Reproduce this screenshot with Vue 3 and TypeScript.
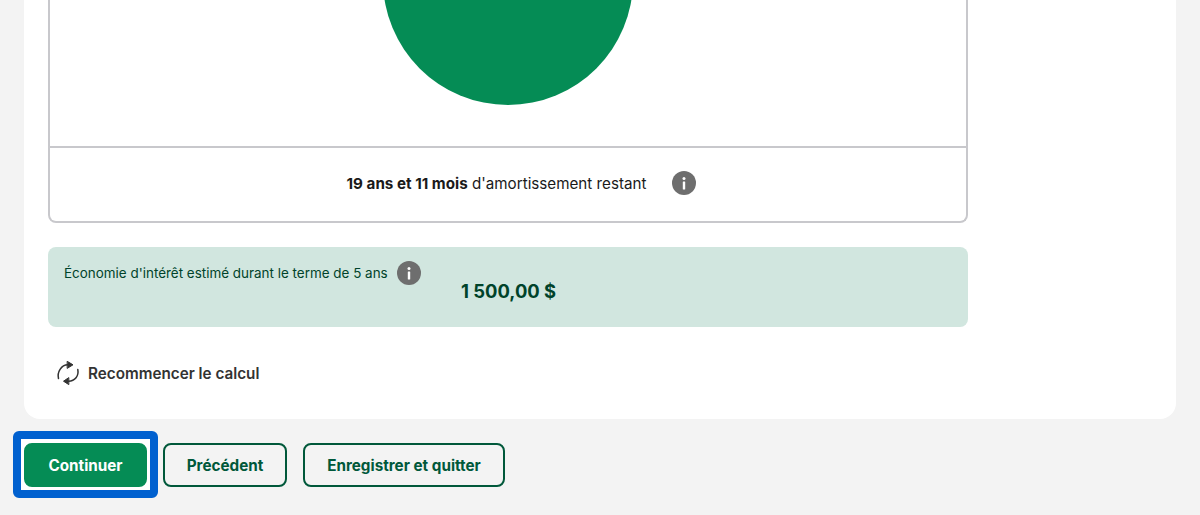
<template>
  <div class="page">
    <section class="card">
      <div class="chart-box">
        <div class="chart">
          <svg class="donut" width="260" height="105" viewBox="0 0 260 105" aria-hidden="true">
            <circle cx="130" cy="-20" r="125" fill="#058c55" />
          </svg>
        </div>
        <div class="chart-foot">
          <p class="remaining"><strong>19 ans et 11 mois</strong> d'amortissement restant</p>
          <svg class="info" width="24" height="24" viewBox="0 0 24 24" aria-hidden="true">
            <circle cx="12" cy="12" r="12" fill="#6e6e6e" />
            <circle cx="12" cy="7.400" r="1.500" fill="#fff" />
            <rect x="10.800" y="10.400" width="2.400" height="8" rx="0.500" fill="#fff" />
          </svg>
        </div>
      </div>

      <div class="savings">
        <div class="savings-label">
          <span>Économie d'intérêt estimé durant le terme de 5 ans</span>
          <svg class="info" width="24" height="24" viewBox="0 0 24 24" aria-hidden="true">
            <circle cx="12" cy="12" r="12" fill="#6e6e6e" />
            <circle cx="12" cy="7.400" r="1.500" fill="#fff" />
            <rect x="10.800" y="10.400" width="2.400" height="8" rx="0.500" fill="#fff" />
          </svg>
        </div>
        <div class="savings-amount">1 500,00 $</div>
      </div>

      <button class="reset" type="button">
        <svg width="24" height="26" viewBox="0 0 24 26" fill="none" stroke="#333" stroke-width="1.500" stroke-linecap="round" aria-hidden="true">
          <path d="M2.500 18.500C1 12 5 5 12 4.800h1" />
          <path d="M21.800 9.500C23 16 19 21 12.500 21.200h-1" />
          <path d="M11.500 1.500 17 4.800l-5.500 3.400z" fill="#333" stroke-linejoin="round" stroke-width="1" />
          <path d="M12.500 17.800 7.500 21.200l5 3.200z" fill="#333" stroke-linejoin="round" stroke-width="1" />
        </svg>
        <span>Recommencer le calcul</span>
      </button>
    </section>

    <nav class="actions">
      <button class="btn primary" type="button">Continuer</button>
      <button class="btn back" type="button">Précédent</button>
      <button class="btn save" type="button">Enregistrer et quitter</button>
    </nav>
  </div>
</template>

<script setup lang="ts">
</script>

<style>
html,
body {
  margin: 0;
  background: #f3f3f3;
}
</style>

<style scoped>
.page {
  box-sizing: border-box;
  height: 515px;
  overflow: hidden;
  padding: 0 24px;
  font-family: "Inter", "Liberation Sans", sans-serif;
  color: #1a1a1a;
}

.card {
  box-sizing: border-box;
  height: 419px;
  padding: 0 24px;
  background: #fff;
  border-radius: 0 0 16px 16px;
}

.chart-box {
  box-sizing: border-box;
  width: 920px;
  height: 223px;
  border: 2px solid #c8c8cc;
  border-top: 0;
  border-radius: 0 0 8px 8px;
}

.chart {
  display: flex;
  justify-content: center;
  height: 146px;
  border-bottom: 2px solid #c8c8cc;
}

.donut {
  display: block;
}

.chart-foot {
  display: flex;
  align-items: center;
  justify-content: center;
  gap: 26px;
  height: 70px;
  padding: 0 0 3px 27px;
}

.remaining {
  margin: 0;
  font-size: 15.200px;
}

.remaining strong {
  font-weight: 700;
}

.info {
  display: block;
  flex: none;
}

.savings {
  box-sizing: border-box;
  width: 920px;
  height: 80px;
  margin-top: 24px;
  padding: 14px 16px;
  background: #d1e6df;
  border-radius: 8px;
  color: #00432a;
}

.savings-label {
  display: flex;
  align-items: center;
  gap: 9px;
  width: 380px;
  font-size: 13.450px;
}

.savings-amount {
  margin-top: -5px;
  padding-left: 397px;
  font-size: 18.400px;
  font-weight: 700;
}

.reset {
  display: flex;
  align-items: center;
  gap: 8px;
  margin: 33px 0 0 8px;
  padding: 0;
  border: 0;
  background: none;
  font: inherit;
  font-size: 15.250px;
  font-weight: 600;
  color: #333;
}

.actions {
  display: flex;
  gap: 16px;
  margin-top: 24px;
  isolation: isolate;
}

.btn {
  box-sizing: border-box;
  height: 44px;
  padding: 0;
  border: 2px solid #00583a;
  border-radius: 8px;
  background: transparent;
  font: inherit;
  font-size: 15.250px;
  font-weight: 700;
  color: #00583a;
}

.back {
  width: 124px;
}

.save {
  width: 202px;
}

.primary {
  position: relative;
  width: 123px;
  background: #058c55;
  border-color: #058c55;
  color: #fff;
}

/* focus ring: white gap with square inner corners, blue band outside */
.primary::before {
  content: "";
  position: absolute;
  inset: -14px -13px -13px;
  z-index: -1;
  border: 8px solid #0060cf;
  border-radius: 6px;
  background: #fff;
}
</style>
